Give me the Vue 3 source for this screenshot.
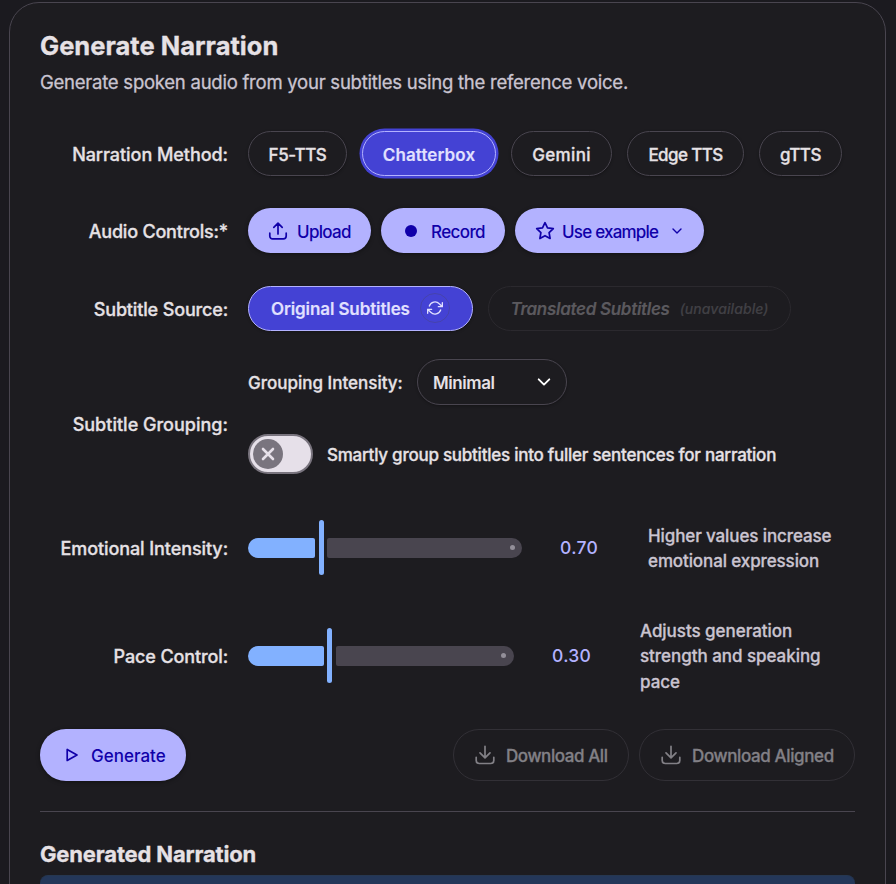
<script setup>
const methods = [
  { name: 'F5-TTS', cls: 'm-f5' },
  { name: 'Chatterbox', cls: 'm-chatter selected' },
  { name: 'Gemini', cls: 'm-gemini' },
  { name: 'Edge TTS', cls: 'm-edge' },
  { name: 'gTTS', cls: 'm-gtts' }
]
</script>

<template>
  <main class="page">
    <section class="card">
      <h2 class="title">Generate Narration</h2>
      <p class="desc">Generate spoken audio from your subtitles using the reference voice.</p>

      <div class="row methods">
        <label class="label l-method">Narration Method:</label>
        <div class="pills">
          <button v-for="m in methods" :key="m.name" class="pill" :class="m.cls">{{ m.name }}</button>
        </div>
      </div>

      <div class="row audio">
        <label class="label l-audio">Audio Controls:*</label>
        <div class="actions">
          <button class="tonal b-upload">
            <svg width="20" height="20" viewBox="0 0 20 20"><path d="M10 13V2.600M5.800 6.400 10 2.200l4.200 4.200M1.800 12.200v2.900a2.800 2.800 0 0 0 2.800 2.800h10.800a2.800 2.800 0 0 0 2.800-2.800v-2.900" /></svg>
            <span>Upload</span>
          </button>
          <button class="tonal b-record">
            <svg width="20" height="20" viewBox="0 0 20 20"><circle class="solid" cx="10" cy="10" r="6" /></svg>
            <span>Record</span>
          </button>
          <button class="tonal b-example">
            <svg width="20" height="20" viewBox="0 0 20 20"><path d="M10 1.700l2.500 5.200 5.800.8-4.200 4 1 5.800-5.100-2.800-5.100 2.800 1-5.800-4.200-4 5.800-.8z" /></svg>
            <span>Use example</span>
            <svg class="chev" width="12" height="12" viewBox="0 0 12 12"><path d="M2 4l4 4 4-4" /></svg>
          </button>
        </div>
      </div>

      <div class="row source">
        <label class="label l-source">Subtitle Source:</label>
        <div class="pills">
          <button class="pill selected-flat">
            <span>Original Subtitles</span>
            <i class="refresh">
              <svg width="16" height="16" viewBox="0 0 24 24"><path d="M23 4v6h-6M1 20v-6h6M3.500 9a9 9 0 0 1 14.900-3.400L23 10M1 14l4.600 4.400A9 9 0 0 0 20.500 15" /></svg>
            </i>
          </button>
          <button class="pill unavailable" disabled>
            <span>Translated Subtitles</span><small>(unavailable)</small>
          </button>
        </div>
      </div>

      <div class="row grouping">
        <label class="label l-group">Subtitle Grouping:</label>
        <div class="stack">
          <div class="line">
            <span class="sub">Grouping Intensity:</span>
            <div class="select">
              <span>Minimal</span>
              <svg width="16" height="16" viewBox="0 0 16 16"><path d="M2.700 5.300l5.300 5.300 5.300-5.300" /></svg>
            </div>
          </div>
          <div class="line second">
            <div class="switch">
              <div class="thumb">
                <svg width="16" height="16" viewBox="0 0 16 16"><path d="M3 3l10 10M13 3L3 13" /></svg>
              </div>
            </div>
            <span class="smart">Smartly group subtitles into fuller sentences for narration</span>
          </div>
        </div>
      </div>

      <div class="row emotion">
        <label class="label l-emo">Emotional Intensity:</label>
        <div class="slider s-emo">
          <div class="fill"></div>
          <div class="handle"></div>
          <div class="rest"><i></i></div>
        </div>
        <span class="value">0.70</span>
        <p class="hint h-emo">Higher values increase<br />emotional expression</p>
      </div>

      <div class="row pace">
        <label class="label l-pace">Pace Control:</label>
        <div class="slider s-pace">
          <div class="fill"></div>
          <div class="handle"></div>
          <div class="rest"><i></i></div>
        </div>
        <span class="value">0.30</span>
        <p class="hint h-pace">Adjusts generation<br />strength and speaking<br />pace</p>
      </div>

      <div class="footer">
        <button class="tonal generate">
          <svg width="16" height="16" viewBox="0 0 16 16"><path d="M3.200 2.500v11L13 8z" /></svg>
          <span>Generate</span>
        </button>
        <div class="downloads">
          <button class="pill dl dl-all" disabled>
            <svg width="22" height="22" viewBox="0 0 22 22"><path d="M11 2.300v11.200M6 8.800l5 5 5-5M2.200 13.300v3.200a3 3 0 0 0 3 3h11.600a3 3 0 0 0 3-3v-3.200" /></svg>
            <span>Download All</span>
          </button>
          <button class="pill dl dl-aligned" disabled>
            <svg width="22" height="22" viewBox="0 0 22 22"><path d="M11 2.300v11.200M6 8.800l5 5 5-5M2.200 13.300v3.200a3 3 0 0 0 3 3h11.600a3 3 0 0 0 3-3v-3.200" /></svg>
            <span>Download Aligned</span>
          </button>
        </div>
      </div>

      <hr class="rule" />
      <h3 class="subtitle">Generated Narration</h3>
      <div class="panel"></div>
    </section>
  </main>
</template>

<style>
body {
  background: #1b1a1f;
  overflow: hidden;
}
</style>

<style scoped>
* {
  box-sizing: border-box;
}
.page {
  height: 884px;
  padding: 2px 10px 0 9px;
  overflow: hidden;
  font-family: Inter, "Google Sans", sans-serif;
  color: #e6e1e5;
}
.card {
  height: 940px;
  padding: 28px 30px 0;
  border: 1px solid #49454f;
  border-radius: 30px;
  background: #1d1c20;
}
.title,
.desc,
.subtitle,
.hint {
  margin: 0;
  white-space: nowrap;
}
.title,
.subtitle,
.label,
.pill,
.sub,
.smart,
.hint {
  -webkit-text-stroke: 0.3px currentColor;
}
.title {
  height: 30px;
  line-height: 30px;
  font-size: 25.5px;
  font-weight: 700;
  letter-spacing: 0.02px;
}
.desc {
  height: 25px;
  margin-top: 9px;
  line-height: 25px;
  font-size: 18.5px;
  font-weight: 400;
  letter-spacing: -0.24px;
  color: #cac4d0;
  -webkit-text-stroke: 0.3px currentColor;
}
.row {
  display: flex;
  align-items: center;
}
.label {
  width: 188px;
  margin-right: 20px;
  flex: none;
  text-align: right;
  white-space: nowrap;
  font-size: 18px;
  font-weight: 500;
  line-height: 24px;
  padding-top: 2px;
}
.methods { height: 45px; margin-top: 36px; }
.audio { height: 45px; margin-top: 32px; }
.source { height: 45px; margin-top: 33px; }
.grouping { height: 130px; margin-top: 28px; align-items: stretch; }
.grouping .label { align-self: center; }
.emotion { height: 56px; margin-top: 31px; }
.pace { height: 80px; margin-top: 40px; }
.l-method { letter-spacing: -0.05px; }
.l-audio { letter-spacing: -0.2px; }
.l-source { letter-spacing: -0.15px; }
.l-group { letter-spacing: 0.01px; }
.l-emo { letter-spacing: -0.09px; }
.l-pace { letter-spacing: -0.12px; }

.pills { display: flex; gap: 15px; }
.actions { display: flex; gap: 10px; }
button {
  font-family: inherit;
  margin: 0;
  white-space: nowrap;
}
.pill {
  display: flex;
  align-items: center;
  justify-content: center;
  height: 45px;
  padding: 2px 0 0;
  border: 1px solid #49454f;
  border-radius: 26px;
  background: #1d1c20;
  color: #e6e1e5;
  font-size: 17px;
  font-weight: 500;
  box-shadow: 0 1px 3px rgba(0, 0, 0, 0.3);
}
.m-f5 { width: 99px; letter-spacing: -0.4px; }
.m-chatter { width: 134px; letter-spacing: 0.1px; }
.m-gemini { width: 101px; letter-spacing: 0.35px; }
.m-edge { width: 117px; letter-spacing: -0.6px; }
.m-gtts { width: 83px; letter-spacing: -0.4px; }
.selected,
.selected-flat,
.unavailable {
  -webkit-text-stroke-width: 0.15px;
}
.selected {
  background: #4442d4;
  border-color: #b3b2ff;
  color: #e1e0ff;
  font-weight: 600;
  box-shadow: 0 0 0 2.500px #4442d4;
}
.tonal {
  display: flex;
  align-items: center;
  height: 45px;
  padding: 0;
  border: 0;
  border-radius: 26px;
  background: #b3b2ff;
  color: #1000a9;
  font-size: 17px;
  font-weight: 500;
  box-shadow: 0 1px 4px rgba(0, 0, 0, 0.4);
}
.tonal span { padding-top: 2px; }
svg {
  flex: none;
  fill: none;
  stroke: currentColor;
  stroke-width: 1.7;
  stroke-linecap: round;
  stroke-linejoin: round;
}
.solid { fill: currentColor; stroke: none; }
.b-upload { width: 123px; padding-left: 20px; gap: 9px; letter-spacing: -0.7px; }
.b-record { width: 124px; padding-left: 20px; gap: 10px; letter-spacing: -0.6px; }
.b-example { width: 189px; padding-left: 20px; gap: 7px; letter-spacing: -0.78px; }
.chev { margin-left: 6px; stroke-width: 1.4; }

.selected-flat {
  width: 225px;
  justify-content: flex-start;
  padding-left: 22px;
  background: #4442d4;
  border-color: #b3b2ff;
  color: #e1e0ff;
  font-weight: 600;
  letter-spacing: -0.11px;
}
.selected-flat span,
.unavailable span { margin-top: -1px; }
.refresh {
  display: flex;
  align-items: center;
  justify-content: center;
  width: 30px;
  height: 30px;
  margin: -3px 0 0 10px;
  border: 1px solid rgba(73, 69, 79, 0.3);
  border-radius: 50%;
}
.refresh svg { stroke-width: 2; }
.unavailable {
  width: 303px;
  border-color: #2b292e;
  box-shadow: none;
  font-style: italic;
  font-weight: 600;
  letter-spacing: -0.3px;
  color: #5b595e;
}
.unavailable small {
  margin: -2px 0 0 10px;
  font-size: 14px;
  font-weight: 500;
  letter-spacing: 0.07px;
  color: #414045;
}

.line { display: flex; align-items: center; height: 46px; }
.second { height: 40px; margin-top: 29px; }
.sub { width: 169px; padding-top: 1px; font-size: 17px; font-weight: 500; letter-spacing: 0; white-space: nowrap; }
.select {
  display: flex;
  align-items: center;
  justify-content: space-between;
  width: 150px;
  height: 46px;
  padding: 1px 14px 0 15px;
  border: 1px solid #49454f;
  border-radius: 23px;
  font-size: 17px;
  font-weight: 600;
  letter-spacing: -0.42px;
  box-shadow: 0 1px 3px rgba(0, 0, 0, 0.3);
}
.select svg { margin-top: -2px; stroke: #fff; stroke-width: 1.9; }
.switch {
  width: 65px;
  height: 40px;
  padding: 3px;
  border: 2px solid #79747e;
  border-radius: 20px;
  background: #e6e0e9;
}
.thumb {
  display: flex;
  align-items: center;
  justify-content: center;
  width: 30px;
  height: 30px;
  border-radius: 50%;
  background: #79747e;
  color: #e6e0e9;
}
.thumb svg { stroke-width: 2.600; }
.smart { margin-left: 14px; padding-top: 2px; font-size: 17px; font-weight: 500; letter-spacing: -0.25px; white-space: nowrap; }

.slider { display: flex; align-items: center; flex: none; height: 56px; }
.s-emo { width: 274px; }
.s-pace { width: 266px; }
.fill { height: 20px; border-radius: 10px 2px 2px 10px; background: #82b1ff; }
.s-emo .fill { width: 67px; }
.s-pace .fill { width: 76px; }
.handle { width: 5px; height: 55px; margin: 0 3px 1px 4px; border-radius: 2.500px; background: #82b1ff; }
.s-pace .handle { margin: 0 4px 1px 3px; }
.rest {
  display: flex;
  flex: 1;
  align-items: center;
  justify-content: flex-end;
  height: 20px;
  padding-right: 7px;
  border-radius: 2px 10px 10px 2px;
  background: #49454f;
}
.s-pace .rest { padding-right: 8px; }
.rest i { width: 5px; height: 5px; margin-bottom: 1px; border-radius: 50%; background: #938f99; }
.value {
  width: 88px;
  margin: -1px 0 0 38px;
  font-size: 17.5px;
  font-weight: 500;
  letter-spacing: 0.3px;
  color: #b3b2ff;
}
.hint { padding-top: 2px; font-size: 17px; font-weight: 500; line-height: 25.400px; letter-spacing: -0.04px; color: #cac4d0; }
.h-emo { letter-spacing: -0.11px; }

.footer { display: flex; justify-content: space-between; height: 52px; margin-top: 33px; }
.generate { width: 146px; height: 52px; padding-left: 24px; gap: 11px; letter-spacing: 0; }
.downloads { display: flex; gap: 10px; }
.dl {
  justify-content: flex-start;
  height: 52px;
  padding-left: 20px;
  gap: 10px;
  border-color: #323036;
  color: #828086;
  box-shadow: none;
}
.dl svg { margin-top: -2px; }
.dl-all { width: 176px; letter-spacing: -0.42px; }
.dl-aligned { width: 216px; letter-spacing: -0.38px; }
.rule { height: 1px; margin: 30px 0 0; border: 0; background: #49454f; }
.subtitle { height: 30px; margin-top: 27px; line-height: 30px; font-size: 22px; font-weight: 700; letter-spacing: -0.16px; }
.panel { height: 50px; margin-top: 6px; border-top: 1px solid #263750; border-radius: 8px; background: #243759; }
</style>
